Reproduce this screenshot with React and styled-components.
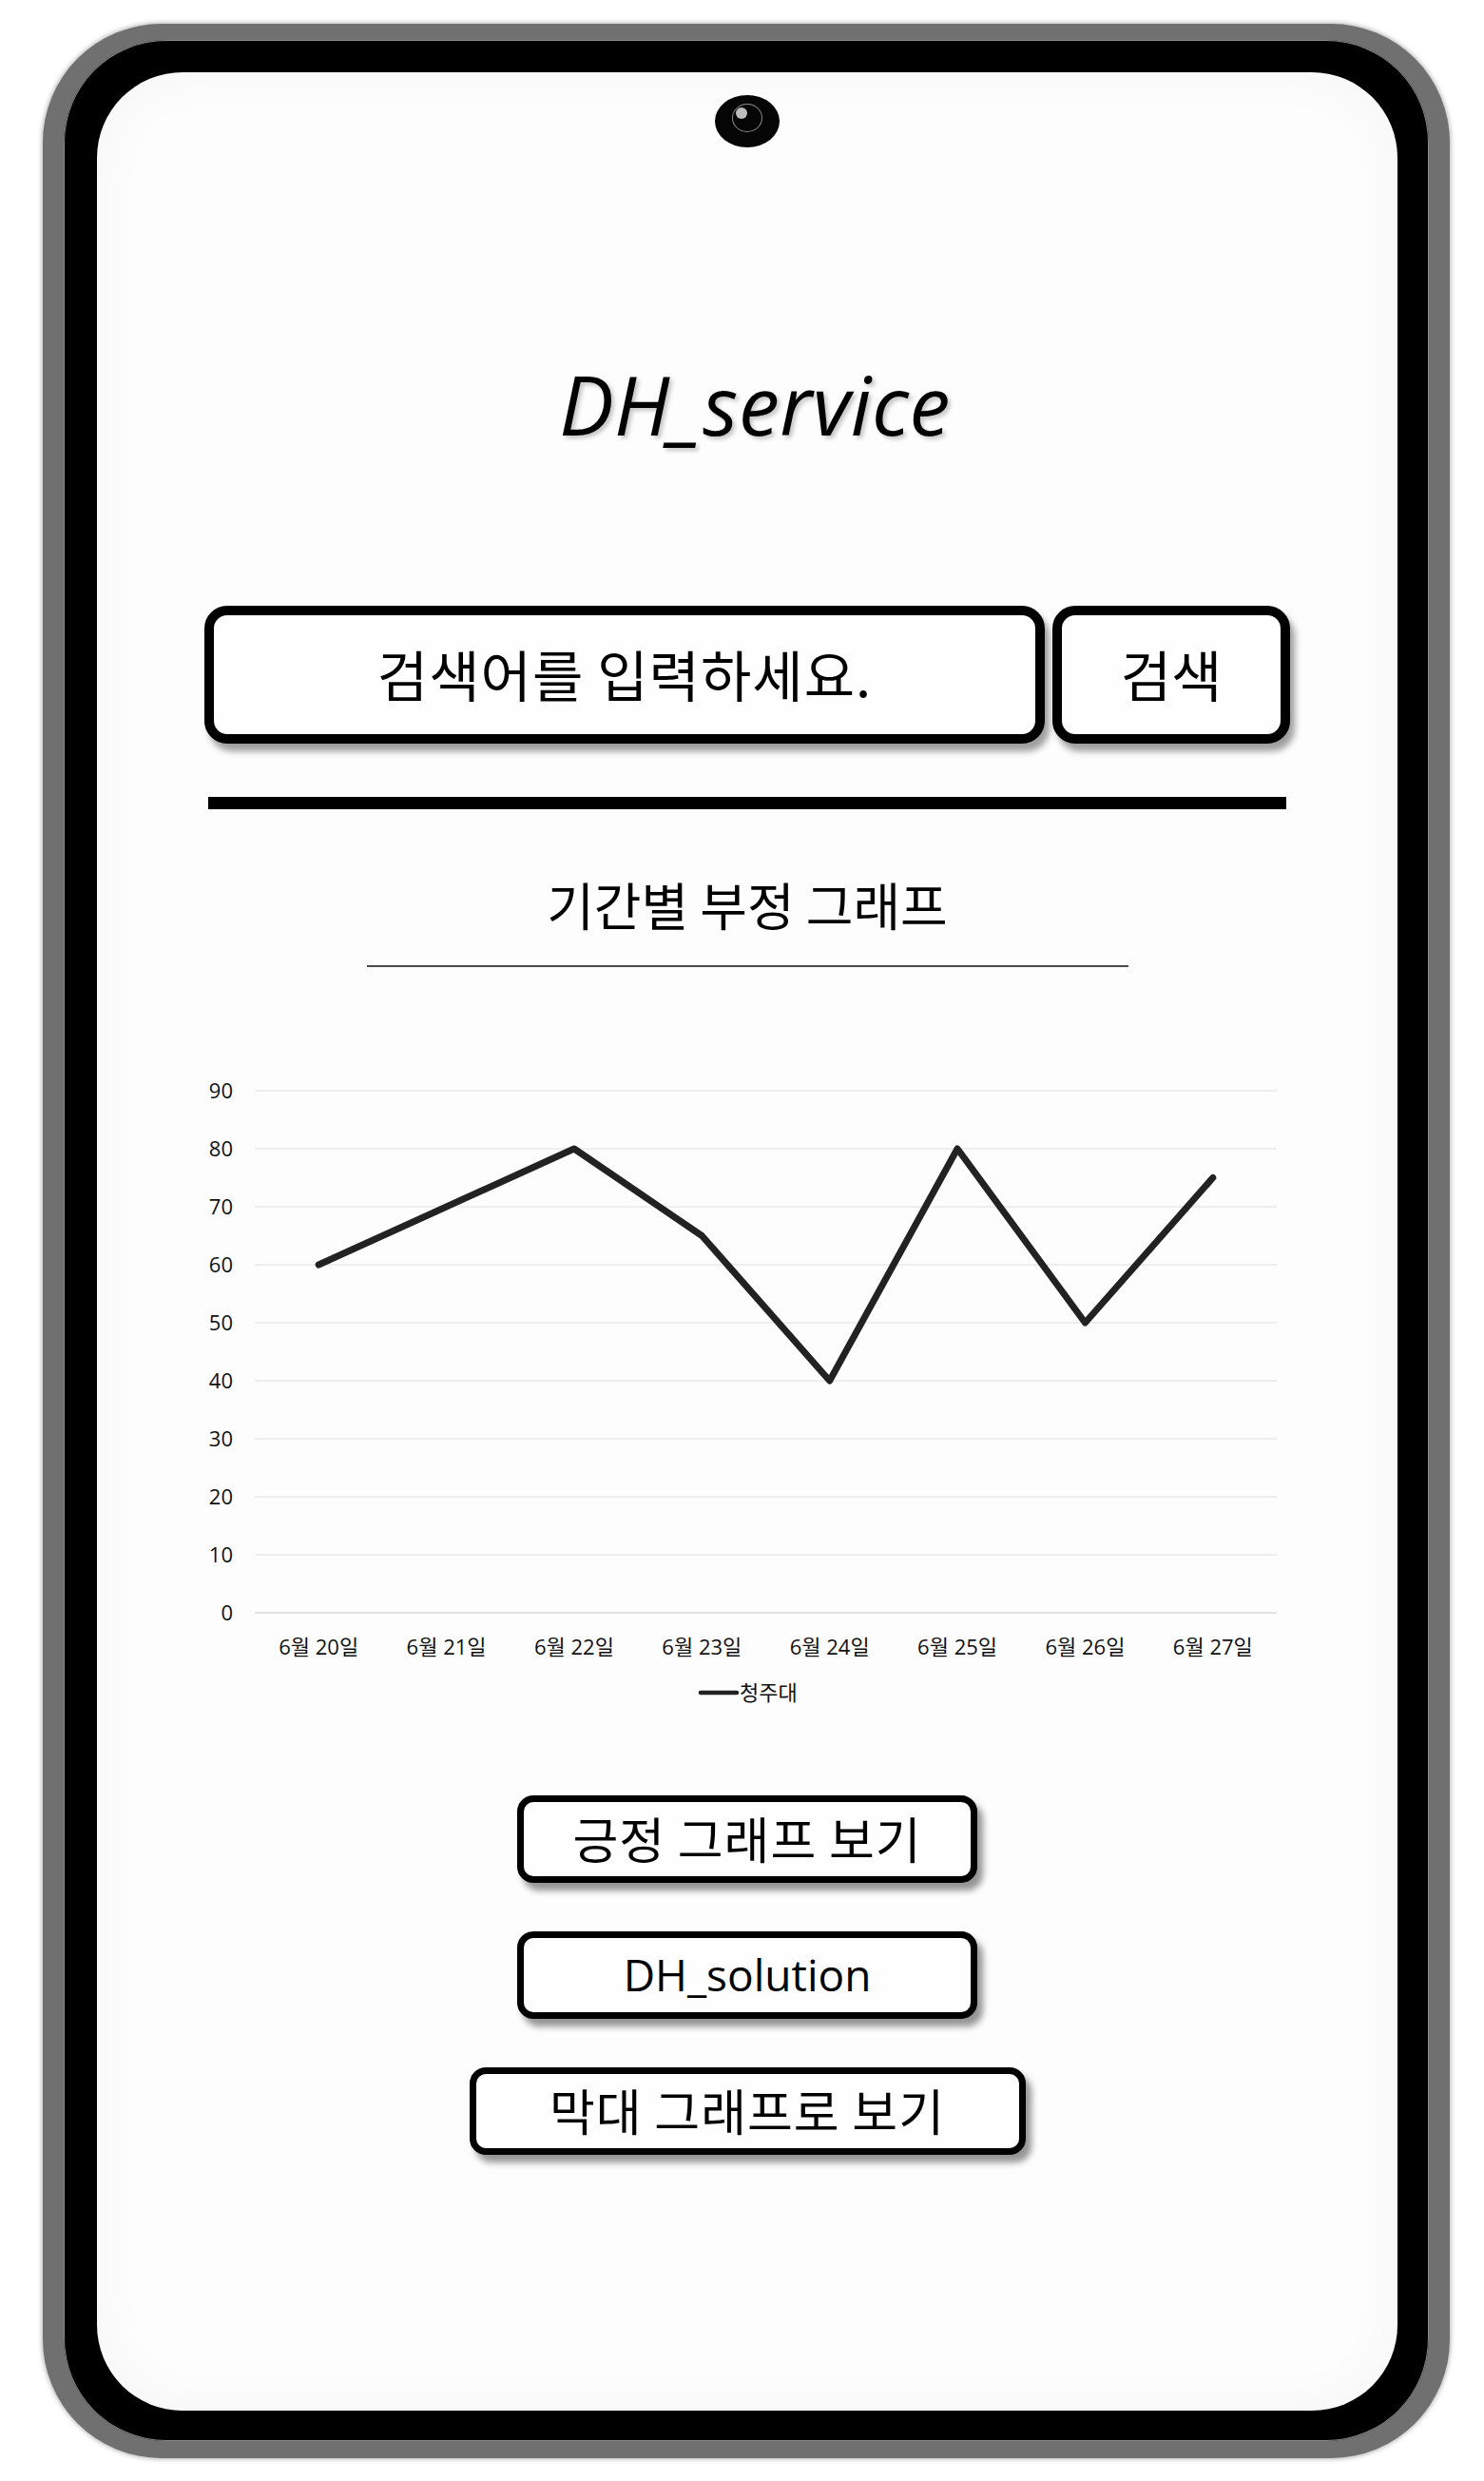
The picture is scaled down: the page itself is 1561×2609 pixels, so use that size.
import React from "react";
import styled, { createGlobalStyle } from "styled-components";

const KR = `"Noto Sans CJK KR", "Open Sans", sans-serif`;
const LATIN = `"Open Sans", "Noto Sans CJK KR", sans-serif`;

const GlobalStyle = createGlobalStyle`
  body {
    margin: 0;
    background: #ffffff;
    font-family: ${LATIN};
    color: #000;
  }
`;

const Page = styled.div`
  width: 1561px;
  height: 2609px;
  box-sizing: border-box;
  padding: 25px 0 0 45px;
`;

const Rim = styled.div`
  width: 1480px;
  height: 2560px;
  box-sizing: border-box;
  padding: 17px 22px 18px 22px;
  border-radius: 125px;
  background: #707070;
  box-shadow: 0 0 5px 1px rgba(0, 0, 0, 0.3);
`;

const Bezel = styled.div`
  height: 100%;
  box-sizing: border-box;
  padding: 34px 33px 32px 35px;
  border-radius: 108px;
  background: #000;
  box-shadow: inset 0 0 0 1px #8a8a8a;
`;

const Screen = styled.div`
  height: 100%;
  box-sizing: border-box;
  padding: 0 113px;
  border-radius: 90px;
  background: #fdfdfd;
  box-shadow: inset 0 0 60px rgba(0, 0, 0, 0.035);
  display: flex;
  flex-direction: column;
  align-items: center;
`;

const Camera = styled.div`
  position: relative;
  margin-top: 24px;
  width: 68px;
  height: 55px;
  border-radius: 50%;
  background: #050505;
  &::before {
    content: "";
    position: absolute;
    left: 18px;
    top: 9px;
    width: 30px;
    height: 28px;
    border-radius: 50%;
    border: 1.5px solid #8c8c8c;
  }
  &::after {
    content: "";
    position: absolute;
    left: 22px;
    top: 13px;
    width: 12px;
    height: 12px;
    border-radius: 50%;
    background: #bdbdbd;
  }
`;

const Logo = styled.h1`
  margin: 220px 0 0 16px;
  height: 100px;
  font-family: ${LATIN};
  font-style: italic;
  font-weight: 400;
  font-size: 86px;
  line-height: 100px;
  letter-spacing: 0.5px;
  text-shadow: 3px 3px 4px rgba(0, 0, 0, 0.22);
`;

const SearchRow = styled.div`
  margin-top: 162px;
  display: flex;
  gap: 8px;
  width: 100%;
  height: 145px;
`;

const boxed = `
  box-sizing: border-box;
  border: 10px solid #000;
  border-radius: 24px;
  background: #fefefe;
  box-shadow: 5px 8px 7px rgba(0, 0, 0, 0.38);
  font-family: ${KR};
  color: #000;
`;

const SearchInput = styled.input`
  ${boxed}
  flex: 1;
  height: 100%;
  padding: 0 0 4px;
  font-size: 58px;
  letter-spacing: 1px;
  text-align: center;
  outline: none;
  &::placeholder {
    color: #000;
    opacity: 1;
  }
`;

const SearchButton = styled.button`
  ${boxed}
  width: 250px;
  height: 100%;
  padding: 0 0 4px;
  font-size: 58px;
  cursor: pointer;
`;

const Divider = styled.hr`
  margin: 56px 4px 0;
  align-self: stretch;
  height: 13px;
  border: none;
  background: #000;
`;

const SectionTitle = styled.h2`
  margin: 65px 0 0;
  height: 70px;
  font-family: ${KR};
  font-weight: 400;
  font-size: 54px;
  line-height: 70px;
  letter-spacing: 0;
`;

const TitleRule = styled.div`
  margin-top: 29px;
  width: 801px;
  height: 2px;
  background: #4a4a4a;
`;

const ChartBox = styled.svg`
  display: block;
  margin-top: 103px;
  width: 1150px;
  height: 680px;
  flex-shrink: 0;
  font-family: ${LATIN};
`;

const ActionList = styled.div`
  margin-top: 88px;
  display: flex;
  flex-direction: column;
  align-items: center;
  gap: 51px;
`;

const ActionButton = styled.button`
  box-sizing: border-box;
  width: ${(p) => p.$width}px;
  height: 92px;
  padding: 0 0 3px;
  border: 7px solid #000;
  border-radius: 17px;
  background: #fefefe;
  box-shadow: 6px 8px 7px rgba(0, 0, 0, 0.42);
  font-family: ${(p) => (p.$latin ? LATIN : KR)};
  font-size: ${(p) => (p.$latin ? 46 : 52)}px;
  letter-spacing: ${(p) => (p.$latin ? 0 : 1)}px;
  color: #000;
  cursor: pointer;
`;

const values = [60, 70, 80, 65, 40, 80, 50, 75];
const days = [20, 21, 22, 23, 24, 25, 26, 27];

function NegativeChart() {
  const left = 57;
  const right = 1132;
  const top = 27;
  const bottom = 576;
  const step = (bottom - top) / 9;
  const cat = (right - left) / values.length;
  const px = (i) => left + cat / 2 + i * cat;
  const py = (v) => bottom - (v / 10) * step;
  const points = values.map((v, i) => `${px(i)},${py(v)}`).join(" ");

  return (
    <ChartBox viewBox="0 0 1150 680">
      {Array.from({ length: 10 }, (_, k) => {
        const y = bottom - k * step;
        return (
          <g key={k}>
            <line x1={left} x2={right} y1={y} y2={y} stroke={k === 0 ? "#d9d9d9" : "#e8e8e8"} strokeWidth="1.5" />
            <text x="34" y={y + 8} textAnchor="end" fontSize="22" fill="#111">
              {k * 10}
            </text>
          </g>
        );
      })}
      {days.map((d, i) => (
        <text key={d} x={px(i)} y="620" textAnchor="middle" fontSize="22" fill="#111" fontFamily={LATIN}>
          6월 {d}일
        </text>
      ))}
      <polyline points={points} fill="none" stroke="#222" strokeWidth="7" strokeLinejoin="round" strokeLinecap="round" />
      <line x1="526" x2="564" y1="660" y2="660" stroke="#222" strokeWidth="4.5" strokeLinecap="round" />
      <text x="567" y="668" fontSize="22" fill="#111" fontFamily={KR}>
        청주대
      </text>
    </ChartBox>
  );
}

export default function App() {
  return (
    <>
      <GlobalStyle />
      <Page>
        <Rim>
          <Bezel>
            <Screen>
              <Camera />
              <Logo>DH_service</Logo>
              <SearchRow>
                <SearchInput placeholder="검색어를 입력하세요." />
                <SearchButton>검색</SearchButton>
              </SearchRow>
              <Divider />
              <SectionTitle>기간별 부정 그래프</SectionTitle>
              <TitleRule />
              <NegativeChart />
              <ActionList>
                <ActionButton $width={484}>긍정 그래프 보기</ActionButton>
                <ActionButton $width={484} $latin>
                  DH_solution
                </ActionButton>
                <ActionButton $width={585}>막대 그래프로 보기</ActionButton>
              </ActionList>
            </Screen>
          </Bezel>
        </Rim>
      </Page>
    </>
  );
}
